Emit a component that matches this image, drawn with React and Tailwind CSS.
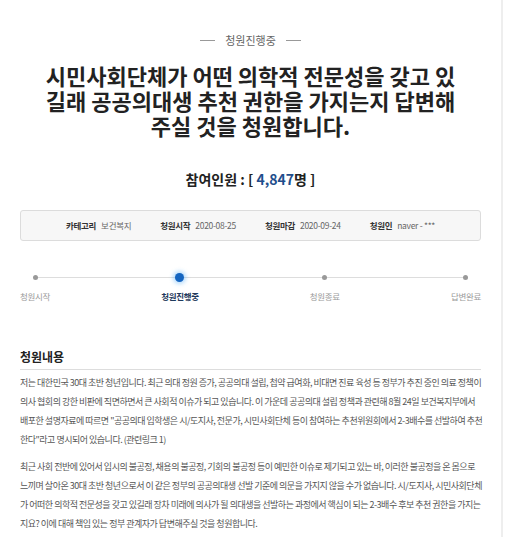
const steps = [
    { label: '청원시작', active: false },
    { label: '청원진행중', active: true },
    { label: '청원종료', active: false },
    { label: '답변완료', active: false },
];

const para1 = [
    '저는 대한민국 30대 초반 청년입니다. 최근 의대 정원 증가, 공공의대 설립, 첩약 급여화, 비대면 진료 육성 등 정부가 추진 중인 의료 정책이',
    '의사 협회의 강한 비판에 직면하면서 큰 사회적 이슈가 되고 있습니다. 이 가운데 공공의대 설립 정책과 관련해 8월 24일 보건복지부에서',
    '배포한 설명자료에 따르면 "공공의대 입학생은 시/도지사, 전문가, 시민사회단체 등이 참여하는 추천위원회에서 2-3배수를 선발하여 추천',
    '한다"라고 명시되어 있습니다. (관련링크 1)',
];

const para2 = [
    '최근 사회 전반에 있어서 입시의 불공정, 채용의 불공정, 기회의 불공정 등이 예민한 이슈로 제기되고 있는 바, 이러한 불공정을 온 몸으로',
    '느끼며 살아온 30대 초반 청년으로서 이 같은 정부의 공공의대생 선발 기준에 의문을 가지지 않을 수가 없습니다. 시/도지사, 시민사회단체',
    '가 어떠한 의학적 전문성을 갖고 있길래 장차 미래에 의사가 될 의대생을 선발하는 과정에서 핵심이 되는 2-3배수 후보 추천 권한을 가지는',
    '지요? 이에 대해 책임 있는 정부 관계자가 답변해주실 것을 청원합니다.',
];

function Info({ label, value }) {
    return (
        <div className="flex items-center gap-[5px]">
            <span className="font-bold text-[#333]">{label}</span>
            <span className="text-[#666]">{value}</span>
        </div>
    );
}

export default function App() {
    return (
        <div
            className="flex w-[512px] h-[537px] overflow-hidden bg-white"
            style={{ fontFamily: '"Noto Sans CJK KR", "Noto Sans", sans-serif' }}
        >
            <div className="w-[501px] shrink-0 px-5">
                {/* status */}
                <div className="pt-[31px] flex items-center justify-center gap-[10px] text-[11px] text-[#666] leading-[18px]">
                    <span className="w-[15px] h-px bg-[#999]" />
                    <span>청원진행중</span>
                    <span className="w-[15px] h-px bg-[#999]" />
                </div>

                {/* title */}
                <h1 className="mt-[14px] text-center text-[22px] font-bold text-[#222] leading-[25px]">
                    시민사회단체가 어떤 의학적 전문성을 갖고 있<br />
                    길래 공공의대생 추천 권한을 가지는지 답변해<br />
                    주실 것을 청원합니다.
                </h1>

                <div className="mt-[31px] text-center text-[14px] font-bold text-[#222] leading-[20px]">
                    참여인원 : [ <span className="text-[#1f4e8c]">4,847</span>명 ]
                </div>

                {/* info box */}
                <div className="mt-[21px] h-[31px] bg-[#f7f7f7] border border-[#dcdcdc] rounded-[3px] flex items-center justify-center gap-[29px] text-[8.5px] tracking-[-0.3px]">
                    <Info label="카테고리" value="보건복지" />
                    <Info label="청원시작" value="2020-08-25" />
                    <Info label="청원마감" value="2020-09-24" />
                    <Info label="청원인" value="naver - ***" />
                </div>

                {/* progress */}
                <div className="mt-[32px] relative">
                    <div className="absolute left-[14px] right-[14px] top-[4px] h-px bg-[#ddd]" />
                    <div className="relative flex justify-between">
                        {steps.map((s, i) => (
                            <div key={i} className="flex flex-col items-center">
                                {s.active ? (
                                    <span className="w-[9px] h-[9px] rounded-full bg-[#1565c0] shadow-[0_0_4px_2px_rgba(33,150,243,0.35)]" />
                                ) : (
                                    <span className="mt-[2px] w-[5px] h-[5px] rounded-full bg-[#999]" />
                                )}
                                <span
                                    className={`${s.active ? 'mt-[8px] font-bold text-[#1f3a5c]' : 'mt-[10px] text-[#999]'} text-[8.5px] tracking-[-0.3px] leading-[12px]`}
                                >
                                    {s.label}
                                </span>
                            </div>
                        ))}
                    </div>
                </div>

                {/* content */}
                <h2 className="mt-[47px] text-[12px] font-bold text-[#222] leading-[16px]">청원내용</h2>
                <div className="mt-[4px] h-px bg-[#ddd]" />
                <div className="mt-[3px] text-[9px] text-[#555] leading-[19px] tracking-[-0.5px] whitespace-nowrap">
                    {para1.map((l, i) => (
                        <div key={i}>{l}</div>
                    ))}
                    <div className="h-[8px]" />
                    {para2.map((l, i) => (
                        <div key={i}>{l}</div>
                    ))}
                </div>
            </div>
            <div className="w-[2px] bg-[#eeeeee]" />
            <div className="flex-1" />
        </div>
    );
}
